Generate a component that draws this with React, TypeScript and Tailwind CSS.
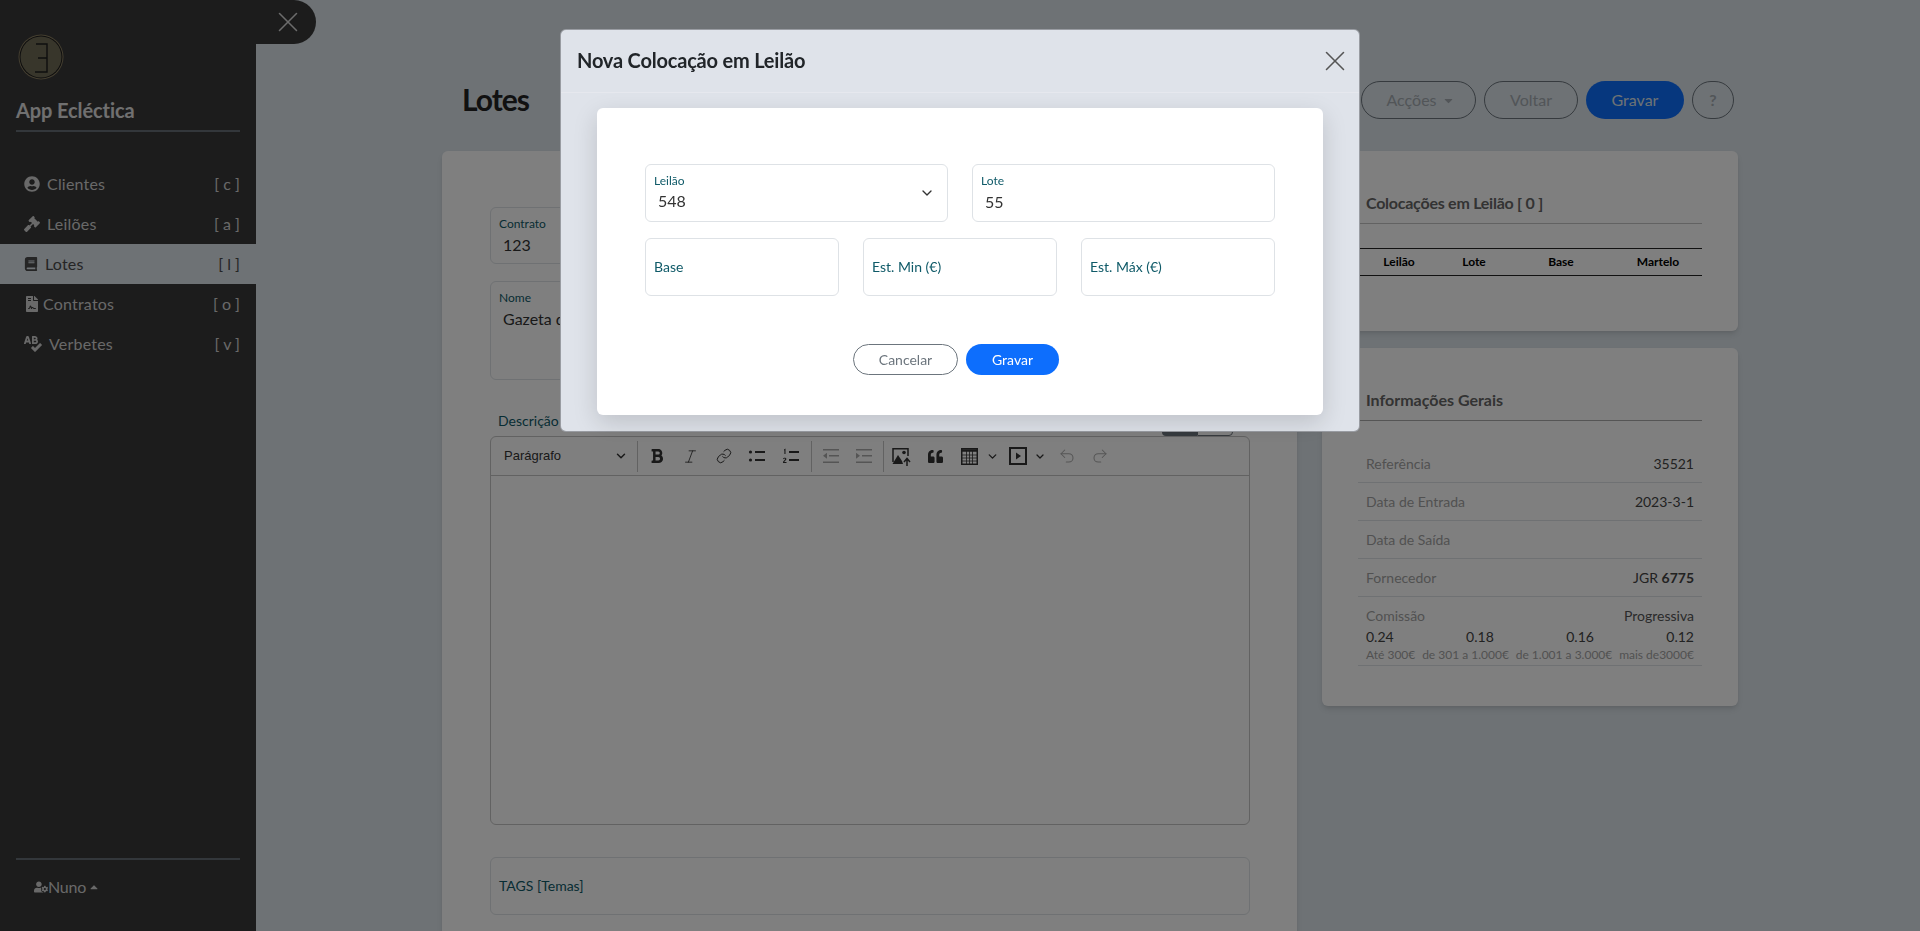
import type { ReactNode } from "react";
import {
  FaBold,
  FaBook,
  FaCaretDown,
  FaCaretUp,
  FaFileContract,
  FaGavel,
  FaQuoteLeft,
  FaSpellCheck,
  FaUserCircle,
  FaUserCog,
} from "react-icons/fa";
import { ChevronDown, Italic, Link, Redo2, Undo2, X } from "lucide-react";

const menu = [
  { label: "Clientes", key: "c", icon: <FaUserCircle size={16} />, gap: "mr-[7px]" },
  { label: "Leilões", key: "a", icon: <FaGavel size={16} />, gap: "mr-[7px]" },
  { label: "Lotes", key: "l", icon: <FaBook size={14} />, gap: "mr-[7px]", active: true },
  { label: "Contratos", key: "o", icon: <FaFileContract size={16} />, gap: "mr-[3px]" },
  { label: "Verbetes", key: "v", icon: <FaSpellCheck size={18} />, gap: "mr-[7px]" },
];

function Logo() {
  return (
    <svg width="46" height="46" viewBox="0 0 46 46" className="ml-[18px]">
      <circle cx="23" cy="23" r="22.5" fill="#8b7f62" />
      <circle cx="23" cy="23" r="21.5" fill="#1c1c1c" />
      <circle cx="23" cy="23" r="20.5" fill="#716c57" />
      <path d="M18 10h11v28H17M20 24h9" fill="none" stroke="#1c1c1c" strokeWidth="1.4" />
    </svg>
  );
}

function Sidebar() {
  return (
    <aside className="w-[256px] shrink-0 bg-[#383838] h-full flex flex-col relative">
      <div className="absolute left-[240px] top-0 w-[76px] h-[44px] bg-[#383838] rounded-r-[22px] flex items-center justify-end pr-[11px] text-[#d8d8d8]">
        <X size={34} strokeWidth={1.1} />
      </div>
      <div className="pt-[34px]">
        <Logo />
      </div>
      <div className="mx-4 mt-[16px] pb-[6px] border-b-2 border-[#666e76] text-[20px] leading-[28px] font-bold tracking-[-0.1px] text-[#e0e0e0]">
        App Ecléctica
      </div>
      <nav className="mt-[32px]">
        {menu.map((m) => (
          <div
            key={m.key}
            className={
              m.active
                ? "h-[40px] flex items-center pl-6 pr-4 bg-[#dce4ea] text-[#4a4a4a]"
                : "h-[40px] flex items-center pl-6 pr-4 text-[#d2d2d2]"
            }
          >
            <span className={m.gap}>{m.icon}</span>
            <span className="text-[16px] tracking-[0.2px]">{m.label}</span>
            <span className="ml-auto text-[16px]">[ {m.key} ]</span>
          </div>
        ))}
      </nav>
      <div className="mt-auto mx-4 border-t-2 border-[#666e76] h-[73px] flex items-center pl-[18px] pb-[18px] text-[#d2d2d2]">
        <FaUserCog size={14} />
        <span className="text-[16px] tracking-[-0.2px]">Nuno</span>
        <FaCaretUp size={12} className="ml-[2px]" />
      </div>
    </aside>
  );
}

function FloatField({
  label,
  value,
  className = "",
  valueClass = "mt-[1px]",
}: {
  label: string;
  value?: string;
  className?: string;
  valueClass?: string;
}) {
  return (
    <div className={`border border-[#dee2e6] rounded-[6px] bg-white px-2 pt-[8px] ${className}`}>
      <div className="text-[12px] leading-[16px] text-[#0f5a68]">{label}</div>
      <div className={`text-[16px] leading-[24px] pl-1 text-[#333] ${valueClass}`}>{value}</div>
    </div>
  );
}

function ToolIcon({ children, className = "w-[33.5px]" }: { children: ReactNode; className?: string }) {
  return <span className={`flex items-center justify-center shrink-0 ${className}`}>{children}</span>;
}

function Toolbar() {
  return (
    <div className="h-[39px] border-b border-[#c4c4c4] flex items-center text-[#333] font-['Liberation_Sans',sans-serif]">
      <div className="w-[147px] shrink-0 flex items-center pl-[13px] pr-[9px] text-[13px] h-[31px] border-r border-[#c4c4c4]">
        Parágrafo
        <ChevronDown size={14} strokeWidth={2.5} className="ml-auto" />
      </div>
      <div className="w-[174px] shrink-0 flex items-center pl-[2px] h-[31px] border-r border-[#c4c4c4]">
        <ToolIcon><FaBold size={16} /></ToolIcon>
        <ToolIcon><Italic size={17} strokeWidth={1.2} /></ToolIcon>
        <ToolIcon><Link size={16} strokeWidth={1.5} /></ToolIcon>
        <ToolIcon>
          <svg width="18" height="18" viewBox="0 0 18 18" fill="currentColor">
            <circle cx="2.5" cy="5" r="1.6" />
            <circle cx="2.5" cy="13" r="1.6" />
            <path d="M7 4h10v2H7zM7 12h10v2H7z" />
          </svg>
        </ToolIcon>
        <ToolIcon>
          <svg width="18" height="18" viewBox="0 0 18 18" fill="currentColor">
            <path d="M2 2.5l1.5-1V7H2.4V3.2L2 3.4zM1 11.5c.5-1.2 3.4-1.2 3.4.6 0 1-1.5 1.8-2.1 2.8h2.2V16H1v-1c.6-1.3 2.2-2.2 2.2-3 0-.7-1-.6-1.4.2z" />
            <path d="M7 4h10v2H7zM7 12h10v2H7z" />
          </svg>
        </ToolIcon>
      </div>
      <div className="w-[72px] shrink-0 flex items-center pl-[2px] h-[31px] border-r border-[#c4c4c4] text-[#aaa]">
        <ToolIcon>
          <svg width="18" height="18" viewBox="0 0 18 18" fill="currentColor">
            <path d="M1 2h16v1.5H1zM7 8h10v1.5H7zM1 14.5h16V16H1zM1 8.7l4-3v6z" />
          </svg>
        </ToolIcon>
        <ToolIcon>
          <svg width="18" height="18" viewBox="0 0 18 18" fill="currentColor">
            <path d="M1 2h16v1.5H1zM7 8h10v1.5H7zM1 14.5h16V16H1zM5 8.7l-4-3v6z" />
          </svg>
        </ToolIcon>
      </div>
      <div className="flex items-center pl-[1px]">
        <ToolIcon className="w-[33px]">
          <svg width="21" height="21" viewBox="0 0 21 21" fill="none">
            <path d="M2 16V2.8h15V10" stroke="currentColor" strokeWidth="1.5" />
            <path d="M1.5 18 7 9l4 6 1 3z" fill="currentColor" />
            <circle cx="13" cy="6.5" r="1.8" fill="currentColor" />
            <path d="M16 20v-7M13 16l3-3.5 3 3.5" stroke="currentColor" strokeWidth="1.5" />
          </svg>
        </ToolIcon>
        <ToolIcon className="w-[35px]"><FaQuoteLeft size={15} /></ToolIcon>
        <ToolIcon className="w-[32px]">
          <svg width="17" height="17" viewBox="0 0 17 17" fill="none" stroke="currentColor">
            <rect x="0.75" y="0.75" width="15.5" height="15.5" strokeWidth="1.5" />
            <path d="M1 2.5h15" strokeWidth="2.5" />
            <path d="M1 7h15M1 10h15M1 13h15M5.5 3v13M8.5 3v13M11.5 3v13" strokeWidth="0.8" />
          </svg>
        </ToolIcon>
        <ToolIcon className="w-[14px]"><ChevronDown size={13} strokeWidth={2.5} /></ToolIcon>
        <ToolIcon className="w-[32px] ml-[3px]">
          <svg width="18" height="18" viewBox="0 0 18 18">
            <path d="M1 1h16v16H1z" fill="none" stroke="currentColor" strokeWidth="2" />
            <path d="M7 5.5v7l5-3.5z" fill="currentColor" />
          </svg>
        </ToolIcon>
        <ToolIcon className="w-[12px]"><ChevronDown size={13} strokeWidth={2.5} /></ToolIcon>
        <ToolIcon className="w-[42px] text-[#aaa]"><Undo2 size={18} strokeWidth={1.4} /></ToolIcon>
        <ToolIcon className="w-[24px] text-[#aaa]"><Redo2 size={18} strokeWidth={1.4} /></ToolIcon>
      </div>
    </div>
  );
}

function LeftCard() {
  return (
    <div className="w-[855px] shrink-0 bg-white rounded-t-[6px] shadow-md px-12 pt-[56px] h-[800px]">
      <FloatField label="Contrato" value="123" className="h-[57px]" />
      <FloatField label="Nome" value="Gazeta de Lisboa" className="h-[99px] mt-[17px]" />
      <div className="flex items-end justify-between mt-[26px] h-[30px] pr-4">
        <span className="text-[14px] leading-[20px] pl-2 pb-[5px] text-[#0f5a68]">Descrição</span>
        <div className="flex h-[30px] mr-0">
          <span className="w-[35px] bg-[#6c757d] rounded-l-[4px]" />
          <span className="w-[36px] border border-[#6c757d] rounded-r-[4px]" />
        </div>
      </div>
      <div className="w-[760px] h-[389px] border border-[#c4c4c4] rounded-[6px]">
        <Toolbar />
      </div>
      <div className="w-[760px] h-[58px] mt-[32px] border border-[#dee2e6] rounded-[6px] flex items-center px-2 pb-[2px] text-[14px] text-[#0f5a68]">
        TAGS [Temas]
      </div>
    </div>
  );
}

function InfoRow({ label, children }: { label: string; children?: ReactNode }) {
  return (
    <div className="h-[38px] border-b border-[#dee2e6] flex items-center justify-between px-2 text-[14px]">
      <span className="text-[#a3a3a3]">{label}</span>
      <span className="text-[#444]">{children}</span>
    </div>
  );
}

function RightCards() {
  return (
    <div className="w-[416px] shrink-0">
      <div className="h-[180px] bg-white rounded-[6px] shadow-md px-9 pt-[41px]">
        <div className="h-[32px] border-b border-[#c4c4c4] px-2 text-[16px] leading-[22px] font-bold tracking-[-0.25px] text-[#666]">
          Colocações em Leilão [ 0 ]
        </div>
        <div className="mt-[24px] h-[28px] border-y border-[#222] grid grid-cols-[82px_68px_106px_88px] items-center text-center text-[12px] font-bold text-black">
          <span>Leilão</span>
          <span>Lote</span>
          <span>Base</span>
          <span>Martelo</span>
        </div>
      </div>
      <div className="h-[358px] mt-[17px] bg-white rounded-[6px] shadow-md px-9 pt-[41px]">
        <div className="h-[32px] border-b border-[#aaa] px-2 text-[16px] leading-[22px] font-bold text-[#666]">
          Informações Gerais
        </div>
        <div className="mt-[24px]">
          <InfoRow label="Referência">35521</InfoRow>
          <InfoRow label="Data de Entrada">2023-3-1</InfoRow>
          <InfoRow label="Data de Saída" />
          <InfoRow label="Fornecedor">
            JGR <b className="font-bold">6775</b>
          </InfoRow>
          <div className="border-b border-[#dee2e6] px-2 h-[69px] pt-[9px]">
            <div className="flex justify-between text-[14px] leading-[20px]">
              <span className="text-[#a3a3a3]">Comissão</span>
              <span className="text-[#555]">Progressiva</span>
            </div>
            <div className="flex justify-between text-[14px] leading-[20px] mt-[1px] text-[#444]">
              <span>0.24</span>
              <span>0.18</span>
              <span>0.16</span>
              <span>0.12</span>
            </div>
            <div className="flex justify-between text-[12px] leading-[16px] text-[#a3a3a3]">
              <span>Até 300€</span>
              <span>de 301 a 1.000€</span>
              <span>de 1.001 a 3.000€</span>
              <span>mais de3000€</span>
            </div>
          </div>
        </div>
      </div>
    </div>
  );
}

function Main() {
  return (
    <main className="flex-1 min-w-0 pl-[186px] pr-[182px] h-full overflow-hidden">
      <div className="h-[38px] mt-[81px] flex items-center pr-[4px]">
        <h1 className="pl-5 pb-[2px] text-[30px] font-bold tracking-[-1px] text-[#222]">Lotes</h1>
        <div className="ml-auto flex items-center gap-2 text-[16px]">
          <button className="h-[38px] w-[115px] pl-[4px] rounded-full border border-[#6c757d] text-[#a4abb1] flex items-center justify-center gap-[5px]">
            Acções <FaCaretDown size={13} />
          </button>
          <button className="h-[38px] w-[94px] rounded-full border border-[#6c757d] text-[#a4abb1]">Voltar</button>
          <button className="h-[38px] w-[98px] rounded-full bg-[#0d6efd] text-[#dce4ea]">Gravar</button>
          <button className="h-[38px] w-[42px] rounded-full border border-[#6c757d] text-[#a4abb1] font-bold">?</button>
        </div>
      </div>
      <div className="flex gap-[25px] mt-[32px]">
        <LeftCard />
        <RightCards />
      </div>
    </main>
  );
}

function Modal() {
  return (
    <div className="fixed inset-0 z-10 bg-[rgba(0,0,0,0.5)]">
      <div className="w-[800px] h-[403px] mx-auto mt-[29px] rounded-[6px] border border-[#2f3336]/40 bg-[#dfe3ea]">
        <div className="h-[63px] border-b border-[#e6e8ee] flex items-center pl-[16px] pr-[7px]">
          <h2 className="pb-[2px] text-[20px] font-bold tracking-[-0.2px] text-[#212529]">Nova Colocação em Leilão</h2>
          <X size={34} strokeWidth={1.1} className="ml-auto text-[#555]" />
        </div>
        <div className="mx-[36px] mt-[15px] h-[307px] bg-white rounded-[6px] shadow-[0_8px_24px_rgba(0,0,0,0.15)] px-[48px] pt-[56px]">
          <div className="grid grid-cols-2 gap-x-6">
            <div className="relative">
              <FloatField label="Leilão" value="548" className="h-[58px]" valueClass="" />
              <ChevronDown size={16} className="absolute right-[13px] top-[21px] text-[#333]" />
            </div>
            <FloatField label="Lote" value="55" className="h-[58px]" />
          </div>
          <div className="grid grid-cols-3 gap-x-6 mt-4 text-[14px] text-[#0f5a68]">
            <div className="h-[58px] border border-[#dee2e6] rounded-[6px] px-2 pb-[2px] flex items-center">Base</div>
            <div className="h-[58px] border border-[#dee2e6] rounded-[6px] px-2 pb-[2px] flex items-center">Est. Min (€)</div>
            <div className="h-[58px] border border-[#dee2e6] rounded-[6px] px-2 pb-[2px] flex items-center">Est. Máx (€)</div>
          </div>
          <div className="flex justify-center gap-2 mt-[48px] text-[14px] pr-[8px]">
            <button className="h-[31px] w-[105px] rounded-full border border-[#6c757d] text-[#6c757d]">Cancelar</button>
            <button className="h-[31px] w-[93px] rounded-full bg-[#0d6efd] text-white">Gravar</button>
          </div>
        </div>
      </div>
    </div>
  );
}

export default function App() {
  return (
    <div className="h-screen overflow-hidden flex bg-[#dce4ea] font-['Lato','Open_Sans',sans-serif]">
      <Sidebar />
      <Main />
      <Modal />
    </div>
  );
}
